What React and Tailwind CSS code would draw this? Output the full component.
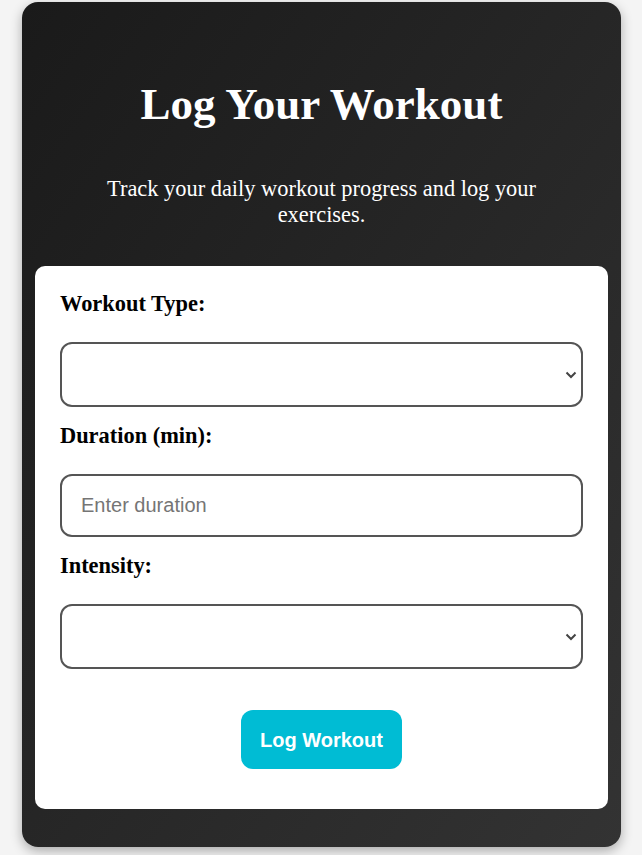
function Chevron() {
  return (
    <svg
      className="pointer-events-none absolute right-[6px] top-1/2 -translate-y-1/2"
      width="12"
      height="8"
      viewBox="0 0 12 8"
      fill="none"
    >
      <path d="M1.5 1.5 L6 6 L10.5 1.5" stroke="#444" strokeWidth="2" />
    </svg>
  );
}

export default function App() {
  return (
    <div className="min-h-[855px] bg-[#f4f4f4] px-[22px] pt-[2px] pb-[8px] font-['Liberation_Serif',serif]">
      <div className="w-[599px] rounded-[16px] bg-gradient-to-br from-[#1a1a1a] to-[#333333] px-[13px] pb-[38px] shadow-[0_4px_12px_rgba(0,0,0,0.3)]">
        <h1 className="pt-[75px] text-center text-[45px] font-bold leading-[55px] text-white">
          Log Your Workout
        </h1>
        <p className="mt-[44px] px-[50px] text-center text-[22.4px] leading-[26px] text-white">
          Track your daily workout progress and log your exercises.
        </p>
        <form
          className="mt-[38px] flex flex-col rounded-[10px] bg-white px-[25px] pt-[25px] pb-[40px]"
          onSubmit={(e) => e.preventDefault()}
        >
          <label htmlFor="type" className="text-[22.4px] font-bold leading-[26px] text-black">
            Workout Type:
          </label>
          <div className="relative mt-[25px]">
            <select
              id="type"
              className="h-[65px] w-full appearance-none rounded-[12px] border-2 border-[#555] bg-white px-[19px] font-['Liberation_Sans',sans-serif] text-[20px]"
            ></select>
            <Chevron />
          </div>

          <label htmlFor="duration" className="mt-[16px] text-[22.4px] font-bold leading-[26px] text-black">
            Duration (min):
          </label>
          <input
            id="duration"
            type="number"
            placeholder="Enter duration"
            className="mt-[25px] h-[63px] w-full rounded-[12px] border-2 border-[#555] bg-white px-[19px] font-['Liberation_Sans',sans-serif] text-[20px] placeholder:text-[#757575]"
          />

          <label htmlFor="intensity" className="mt-[16px] text-[22.4px] font-bold leading-[26px] text-black">
            Intensity:
          </label>
          <div className="relative mt-[25px]">
            <select
              id="intensity"
              className="h-[65px] w-full appearance-none rounded-[12px] border-2 border-[#555] bg-white px-[19px] font-['Liberation_Sans',sans-serif] text-[20px]"
            ></select>
            <Chevron />
          </div>

          <button
            type="submit"
            className="mt-[41px] h-[59px] w-[161px] self-center rounded-[12px] bg-[#00bcd4] font-['Liberation_Sans',sans-serif] text-[20px] font-bold text-white"
          >
            Log Workout
          </button>
        </form>
      </div>
    </div>
  );
}
